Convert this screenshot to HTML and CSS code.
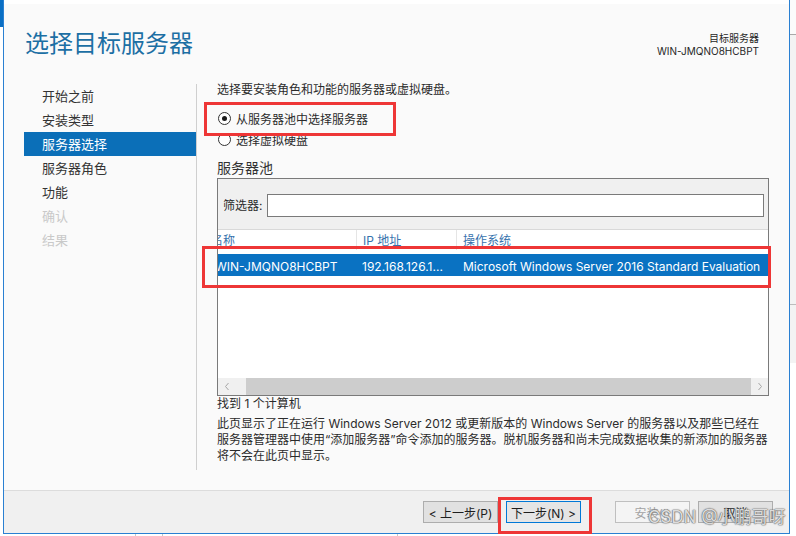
FILE: index.html
```html
<!DOCTYPE html>
<html lang="zh-CN">
<head>
<meta charset="utf-8">
<title>选择目标服务器</title>
<link rel="stylesheet" href="styles.css">
</head>
<body>
<div class="screen">
  <div class="upper">
    <div class="back-left"><div class="back-left-accent"></div></div>
    <div class="dialog">
      <div class="top-strip"></div>
      <header class="head">
        <h1 class="title">选择目标服务器</h1>
        <div class="target">
          <div class="target-label">目标服务器</div>
          <div class="target-name">WIN-JMQNO8HCBPT</div>
        </div>
      </header>
      <div class="main">
        <nav class="nav">
          <div class="nav-item">开始之前</div>
          <div class="nav-item">安装类型</div>
          <div class="nav-item active">服务器选择</div>
          <div class="nav-item">服务器角色</div>
          <div class="nav-item">功能</div>
          <div class="nav-item disabled">确认</div>
          <div class="nav-item disabled">结果</div>
        </nav>
        <section class="content">
          <p class="intro">选择要安装角色和功能的服务器或虚拟硬盘。</p>
          <div class="radio-row first"><span class="radio checked"></span><span>从服务器池中选择服务器</span></div>
          <div class="radio-row"><span class="radio"></span><span>选择虚拟硬盘</span></div>
          <div class="pool-title">服务器池</div>
          <div class="pool">
            <div class="filter">
              <span class="filter-label">筛选器:</span>
              <div class="filter-input"></div>
            </div>
            <div class="list">
              <div class="list-body">
                <div class="list-inner">
                  <div class="list-head">
                    <div class="lh c1">名称</div>
                    <div class="lh c2">IP 地址</div>
                    <div class="lh c3">操作系统</div>
                  </div>
                  <div class="list-row">
                    <div class="lr c1">WIN-JMQNO8HCBPT</div>
                    <div class="lr c2">192.168.126.1...</div>
                    <div class="lr c3">Microsoft Windows Server 2016 Standard Evaluation</div>
                  </div>
                </div>
              </div>
              <div class="hscroll">
                <div class="hs-btn"><svg width="6" height="9" viewBox="0 0 6 9"><polyline points="4.5,1 1.5,4.5 4.5,8" fill="none" stroke="#a6a6a6" stroke-width="1"/></svg></div>
                <div class="hs-track"><div class="hs-thumb"></div></div>
                <div class="hs-btn"><svg width="6" height="9" viewBox="0 0 6 9"><polyline points="1.5,1 4.5,4.5 1.5,8" fill="none" stroke="#a6a6a6" stroke-width="1"/></svg></div>
              </div>
            </div>
          </div>
          <div class="found">找到 1 个计算机</div>
          <p class="note">此页显示了正在运行 Windows Server 2012 或更新版本的 Windows Server 的服务器以及那些已经在<br>服务器管理器中使用“添加服务器”命令添加的服务器。脱机服务器和尚未完成数据收集的新添加的服务器<br>将不会在此页中显示。</p>
        </section>
      </div>
      <footer class="buttons">
        <button class="btn">&lt; 上一步(P)</button>
        <button class="btn default">下一步(N) &gt;</button>
        <button class="btn disabled gap">安装(I)</button>
        <button class="btn">取消</button>
      </footer>
    </div>
    <div class="back-right">
      <div class="br-top"></div>
      <div class="br-mid"></div>
      <div class="br-low"></div>
      <div class="br-bottom"></div>
    </div>
  </div>
  <div class="back-bottom">
    <div class="bb-seg s1"></div>
    <div class="bb-seg s2"></div>
    <div class="bb-seg s3"></div>
  </div>
</div>
<div class="mark mark-radio"></div>
<div class="mark mark-row"></div>
<div class="mark mark-next"></div>
<div class="watermark">CSDN @小鹏哥呀</div>
</body>
</html>
```

FILE: styles.css
```css
* { box-sizing: border-box; }
html, body { margin: 0; padding: 0; }
body {
  width: 796px;
  height: 536px;
  overflow: hidden;
  position: relative;
  background: #ffffff;
  font-family: "Inter", "Noto Sans CJK SC", sans-serif;
  font-size: 12px;
  color: #2b2b2b;
}
.screen { display: flex; flex-direction: column; width: 796px; height: 536px; }
.upper { display: flex; height: 534px; }

.back-left { width: 3px; background: #ffffff; display: flex; flex-direction: column; }
.back-left-accent { height: 27px; background: #0a6fc4; }

.dialog {
  width: 787px;
  height: 534px;
  border-left: 1px solid #2a80d2;
  border-right: 1px solid #2a80d2;
  border-bottom: 1px solid #2a80d2;
  background: #fafafa;
  display: flex;
  flex-direction: column;
}
.top-strip { height: 4px; background: #ffffff; flex: none; }

.head {
  height: 76px;
  flex: none;
  display: flex;
  justify-content: space-between;
  padding: 24px 30px 0 21px;
}
.title {
  margin: 0;
  font-size: 24px;
  line-height: 32px;
  font-weight: normal;
  color: #1c6fa4;
}
.target {
  padding-top: 4px;
  text-align: right;
  font-size: 10px;
  line-height: 13px;
  color: #262626;
}

.main { height: 410px; flex: none; display: flex; }
.nav {
  width: 193px;
  flex: none;
  margin-top: 4px;
  height: 386px;
  border-right: 1px solid #cfcfcf;
  padding-left: 20px;
  font-size: 13px;
}
.nav-item {
  height: 24px;
  line-height: 24px;
  padding-left: 18px;
  color: #333333;
  white-space: nowrap;
}
.nav-item.active { background: #0b6fb8; color: #ffffff; }
.nav-item.disabled { color: #c9c9c9; }

.content { flex: 1; padding: 2px 20px 0 20px; min-width: 0; }
.intro { margin: 0; line-height: 16px; white-space: nowrap; }
.radio-row {
  display: flex;
  align-items: center;
  height: 21px;
  padding-left: 1px;
  gap: 5px;
  white-space: nowrap;
}
.radio-row.first { margin-top: 10px; }
.radio {
  width: 13px;
  height: 13px;
  border: 1px solid #333333;
  border-radius: 50%;
  background: #ffffff;
  display: flex;
  align-items: center;
  justify-content: center;
  flex: none;
}
.radio.checked::after {
  content: "";
  width: 5px;
  height: 5px;
  border-radius: 50%;
  background: #1a1a1a;
}
.pool-title { margin-top: 9px; font-size: 14px; line-height: 18px; color: #333333; }

.pool { margin-top: 1px; border: 1px solid #7a7a7a; background: #f0f0f0; }
.filter { display: flex; align-items: center; padding: 15px 4px 12px 5px; }
.filter-label { width: 44px; line-height: 23px; flex: none; }
.filter-input { flex: 1; height: 23px; border: 1px solid #7a7a7a; background: #ffffff; }

.list { border-top: 1px solid #d9d9d9; background: #ffffff; }
.list-body { height: 148px; overflow: hidden; }
.list-inner { margin-left: -13px; }
.list-head { display: flex; height: 24px; color: #3672ad; white-space: nowrap; }
.lh { height: 20px; line-height: 19px; padding-top: 1px; }
.c1 { width: 151px; flex: none; overflow: hidden; }
.c2 { width: 100px; flex: none; overflow: hidden; }
.c3 { flex: 1; overflow: hidden; }
.lh.c1 { padding-left: 6px; }
.lh.c2 { border-left: 1px solid #e5e5e5; padding-left: 6px; }
.lh.c3 { border-left: 1px solid #e5e5e5; padding-left: 6px; }
.list-row {
  display: flex;
  height: 22px;
  background: #0a72c2;
  color: #ffffff;
  white-space: nowrap;
}
.lr { padding-top: 3px; line-height: 19px; }
.lr.c1 { padding-left: 10px; }
.lr.c2 { padding-left: 6px; }
.lr.c3 { padding-left: 7px; }

.hscroll { display: flex; height: 17px; background: #f0f0f0; }
.hs-btn { width: 17px; flex: none; display: flex; align-items: center; justify-content: center; }
.hs-track { flex: 1; padding-left: 11px; display: flex; }
.hs-thumb { flex: 1; background: #cdcdcd; }

.found { line-height: 16px; }
.note { margin: 4px 0 0; line-height: 16px; white-space: nowrap; }

.buttons {
  height: 43px;
  flex: none;
  border-top: 1px solid #dcdcdc;
  background: #f0f0f0;
  display: flex;
  justify-content: flex-end;
  align-items: flex-start;
  padding: 10px 16px 0 0;
}
.btn {
  width: 75px;
  height: 22px;
  margin: 0;
  padding: 0;
  border: 1px solid #adadad;
  background: #e1e1e1;
  font-family: inherit;
  font-size: 12px;
  color: #1e1e1e;
  display: flex;
  align-items: center;
  justify-content: center;
  white-space: nowrap;
}
.btn + .btn { margin-left: 8px; }
.btn.gap { margin-left: 34px; }
.btn.default { border-color: #0078d7; background: #e5e5e5; }
.btn.disabled { border-color: #bfbfbf; background: #f4f4f4; color: #a3a3a3; }

.back-right { width: 6px; display: flex; flex-direction: column; background: #ffffff; }
.br-top { height: 35px; background: #fbfbfb; border-bottom: 1px solid #a9a9a9; }
.br-mid { height: 270px; background: #f3f3f3; border-bottom: 1px solid #bdbdbd; }
.br-low { height: 58px; background: #f3f3f3; }
.br-bottom { flex: 1; background: #ffffff; }

.back-bottom { height: 2px; display: flex; background: #ffffff; }
.bb-seg { border-right: 1px solid #c8c8c8; }
.s1 { width: 136px; }
.s2 { width: 27px; }
.s3 { width: 235px; }

.mark { position: absolute; border: 3px solid #ee3636; }
.mark-radio { left: 204px; top: 102px; width: 192px; height: 34px; }
.mark-row { left: 202px; top: 246px; width: 569px; height: 42px; }
.mark-next { left: 498px; top: 497px; width: 94px; height: 37px; }

.watermark {
  position: absolute;
  left: 648px;
  top: 506px;
  font-size: 17px;
  line-height: 22px;
  color: rgba(255, 255, 255, 0.8);
  text-shadow: 0 0 1px #5f5f5f, 0 0 1px #5f5f5f, 0 0 2px #808080;
  white-space: nowrap;
}
```
